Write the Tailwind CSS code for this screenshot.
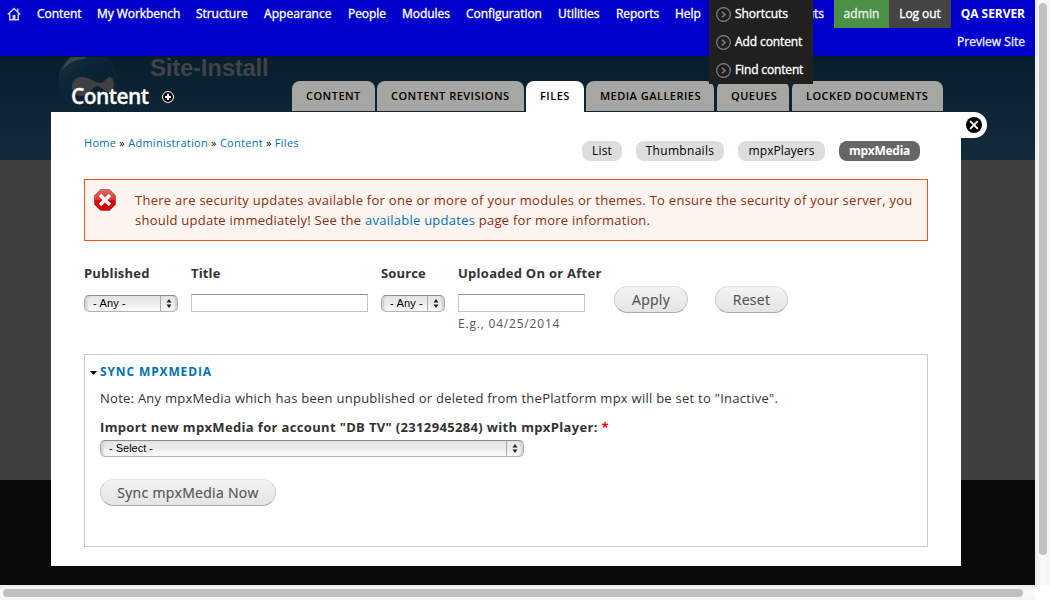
<!DOCTYPE html>
<html lang="en">
<head>
<meta charset="utf-8">
<title>Content | Site-Install</title>
<script src="https://cdn.jsdelivr.net/npm/@tailwindcss/browser@4"></script>
</head>
<body class="w-[1050px] h-[600px] overflow-hidden bg-white font-['Open_Sans',sans-serif] text-[13px] text-[#333]">
<div class="flex h-[585px]">
  <div class="relative w-[1035px] h-[585px] overflow-hidden bg-[#0a0a0a]">

    <!-- Dimmed page behind the overlay -->
    <div class="absolute inset-0 flex flex-col">
      <div class="h-[160px] bg-linear-to-b from-[#061e2e] from-35% to-[#132b3a] overflow-hidden pt-[46px] pl-[59px] flex gap-[34px]">
        <svg class="w-[57px] h-[62px] shrink-0" viewBox="0 0 57 62">
          <defs><linearGradient id="drop" x1="0" y1="0" x2="1" y2="1"><stop offset="0" stop-color="#1d323f"/><stop offset=".45" stop-color="#0a2537"/><stop offset="1" stop-color="#0c1d29"/></linearGradient></defs>
          <path d="M28.500 0C36 4 57 14 57 33C57 50 44 61.500 28.500 61.500C13 61.500 0 50 0 33C0 14 21 4 28.500 0Z" fill="url(#drop)" stroke="#1c2c36" stroke-width=".8"/>
          <path d="M3 24C7 14 13 9 20 9C27 9 29 12 24 13C15 14 9 18 3 24Z" fill="#3a4449"/>
          <path d="M22 31C30 30 36 37 41 37C45 37 48 31 51 31C56 32 56 44 51 46C46 47 42 40 38 40C34 40 30 50 22 50C15 50 12 44 13 39C14 34 18 31 22 31Z" fill="#404040"/>
          <path d="M35 50C38 46 42 46 46 50C42 48 39 48 35 50Z" fill="#404040"/>
        </svg>
        <div class="font-['Liberation_Sans',sans-serif] font-bold text-[24px] leading-[28px] pt-[8px] text-[#404346] tracking-[-0.24px]">Site-Install</div>
      </div>
      <div class="h-[320px] bg-[#404040]"></div>
    </div>

    <div class="relative flex flex-col h-full">
      <!-- Admin menu -->
      <nav class="relative flex flex-wrap content-start h-[57px] shrink-0 bg-[#0000cd] border-b border-[#111820] text-[12px] leading-[28px] font-medium text-white whitespace-nowrap tracking-[-0.05px] [-webkit-text-stroke:0.35px]">
        <div class="w-[29px] h-7 pl-[7px] pt-[7px]">
          <svg class="w-[14px] h-[14px]" viewBox="0 0 14 14" fill="none" stroke="#d5d5f7" stroke-width="1.400"><path d="M.8 7.500L7 1.500L13.200 7.500M2.700 6.500V12.800H11.300V6.500M10.700 1.500V4.500"/><path d="M5.500 8H8.500V12.500H5.500Z" fill="#d5d5f7" stroke="none"/></svg>
        </div>
        <a class="w-[60px] pl-2">Content</a>
        <a class="w-[99px] pl-2">My Workbench</a>
        <a class="w-[68px] pl-2">Structure</a>
        <a class="w-[84px] pl-2 tracking-[0.05px]">Appearance</a>
        <a class="w-[54px] pl-2">People</a>
        <a class="w-[64px] pl-2">Modules</a>
        <a class="w-[92px] pl-2">Configuration</a>
        <a class="w-[58px] pl-2">Utilities</a>
        <a class="w-[59px] pl-2">Reports</a>
        <a class="w-[42px] pl-2">Help</a>
        <a class="w-[125px] pr-[10px] text-right">Shortcuts</a>
        <a class="w-[55px] text-center bg-[#4c8f47] text-[#e8f3e8] tracking-[0.1px]">admin</a>
        <a class="w-[62px] text-center bg-[#444]">Log out</a>
        <a class="w-[84px] pr-[10px] text-right font-bold [-webkit-text-stroke:0]">QA SERVER</a>
        <a class="w-full pr-[10px] text-right text-[#eef] tracking-[0.02px]">Preview Site</a>
        <div class="absolute z-10 left-[709px] top-0 w-[104px] h-[84px] bg-[#202020]">
          <a class="flex items-center h-7 pl-[7px] gap-[4px] tracking-[-0.05px]"><svg class="w-[15px] h-[15px]" viewBox="0 0 15 15" fill="none" stroke="#828282" stroke-width="1.200"><circle cx="7.500" cy="7.500" r="6.800"/><path stroke-width="1.500" d="M6 4.700L9 7.500L6 10.300"/></svg>Shortcuts</a>
          <a class="flex items-center h-7 pl-[7px] gap-[4px] tracking-[-0.1px]"><svg class="w-[15px] h-[15px]" viewBox="0 0 15 15" fill="none" stroke="#828282" stroke-width="1.200"><circle cx="7.500" cy="7.500" r="6.800"/><path stroke-width="1.500" d="M6 4.700L9 7.500L6 10.300"/></svg>Add content</a>
          <a class="flex items-center h-7 pl-[7px] gap-[4px] tracking-[-0.15px]"><svg class="w-[15px] h-[15px]" viewBox="0 0 15 15" fill="none" stroke="#828282" stroke-width="1.200"><circle cx="7.500" cy="7.500" r="6.800"/><path stroke-width="1.500" d="M6 4.700L9 7.500L6 10.300"/></svg>Find content</a>
        </div>
      </nav>

      <!-- Overlay title and tabs -->
      <header class="flex h-[55px] pl-[71px] shrink-0">
        <h1 class="w-[91px] pt-[24px] text-[21px] leading-[30px] font-semibold text-white tracking-[-0.58px] [-webkit-text-stroke:0.3px]">Content</h1>
        <svg class="w-[12px] h-[12px] mt-[34px]" viewBox="0 0 12 12"><circle cx="6" cy="6" r="5.500" fill="#000" stroke="#fff"/><path d="M6 3V9M3 6H9" stroke="#fff" stroke-width="2"/></svg>
        <div class="flex ml-[118px] mt-[24px] h-[30px] text-[11px] leading-[30px] font-semibold text-black tracking-[0.48px] whitespace-nowrap">
          <a class="w-[83px] mr-[2px] pl-[14px] bg-[#a6a7a2] rounded-t-[8px]">CONTENT</a>
          <a class="w-[147px] mr-[2px] pl-[14px] bg-[#a6a7a2] rounded-t-[8px]">CONTENT REVISIONS</a>
          <a class="w-[58px] h-[31px] mr-[2px] pl-[14px] bg-white rounded-t-[8px]">FILES</a>
          <a class="w-[128px] mr-[3px] pl-[14px] bg-[#a6a7a2] rounded-t-[8px]">MEDIA GALLERIES</a>
          <a class="w-[72px] mr-[3px] pl-[14px] bg-[#a6a7a2] rounded-t-[8px]">QUEUES</a>
          <a class="w-[151px] pl-[14px] bg-[#a6a7a2] rounded-t-[8px]">LOCKED DOCUMENTS</a>
        </div>
      </header>

      <div class="flex items-start pl-[51px]">
        <main class="w-[910px] h-[454px] bg-white px-[33px]">
          <div class="flex justify-between h-[67px] pt-[21px]">
            <div class="text-[11px] leading-[20px] text-black tracking-[0.27px] whitespace-pre"><a class="text-[#0071b3]">Home</a> » <a class="text-[#0071b3]">Administration</a> » <a class="text-[#0071b3]">Content</a> » <a class="text-[#0071b3]">Files</a></div>
            <div class="flex mt-[8px] mr-[8px] h-5 gap-[14px] text-[12px] leading-5 text-black text-center">
              <a class="w-[40px] bg-[#ddd] rounded-[8px] tracking-[0.2px]">List</a>
              <a class="w-[88px] bg-[#ddd] rounded-[8px] tracking-[0.3px]">Thumbnails</a>
              <a class="w-[87px] bg-[#ddd] rounded-[8px] tracking-[0.1px]">mpxPlayers</a>
              <a class="w-[81px] bg-[#666] text-white font-bold rounded-[8px] tracking-[-0.26px]">mpxMedia</a>
            </div>
          </div>

          <div class="flex w-[844px] h-[62px] border border-[#ed541d] bg-[#fef5f1] pl-[9px] pt-[9px]">
            <svg class="w-[22px] h-[22px] mr-[19px]" viewBox="0 0 22 22"><defs><linearGradient id="err" x1="0" y1="0" x2="0" y2="1"><stop offset="0" stop-color="#dc6a6a"/><stop offset=".48" stop-color="#d63a3a"/><stop offset=".5" stop-color="#d00"/><stop offset="1" stop-color="#c80000"/></linearGradient></defs><path d="M6.500 .5H15.500L21.500 6.500V15.500L15.500 21.500H6.500L.5 15.500V6.500Z" fill="url(#err)" stroke="#c43030" stroke-width=".6"/><path d="M6 6L16 16M16 6L6 16" stroke="#fff" stroke-width="3.400"/></svg>
            <div class="text-[#8c2e0b] leading-[20px] pt-px whitespace-nowrap"><div class="tracking-[0.275px]">There are security updates available for one or more of your modules or themes. To ensure the security of your server, you</div><div class="tracking-[0.255px]">should update immediately! See the <a class="text-[#0071b3]">available updates</a> page for more information.</div></div>
          </div>

          <div class="flex h-[113px] pt-[22px] whitespace-nowrap">
            <div class="w-[107px]">
              <div class="h-[32px] leading-5 font-bold tracking-[0.2px]">Published</div>
              <div class="flex w-[94px] h-[17px] rounded-[5px] border border-[#b5b5b5] border-t-[#8c8c8c] bg-linear-to-b from-[#e4e4e4] via-[#ececec] to-[#fdfdfd] shadow-[inset_3px_0_2px_-1px_#ccc,inset_-3px_0_2px_-1px_#ccc] font-['Liberation_Sans',sans-serif] text-[11px] leading-[15px] text-black tracking-[0.15px]"><span class="pl-2 w-[75px]">- Any -</span><span class="border-l border-[#aaa] pl-[5px] pt-[3px]"><svg class="w-[6px] h-[9px]" viewBox="0 0 6 9" fill="#222"><path d="M3 0L5.500 3.600H.5ZM3 9L5.500 5.400H.5Z"/></svg></span></div>
            </div>
            <div class="w-[190px]">
              <div class="h-[32px] leading-5 font-bold tracking-[0.15px]">Title</div>
              <div class="w-[177px] h-[18px] -mt-px border border-[#c4c4c4] border-t-[#8f8f8f]"></div>
            </div>
            <div class="w-[77px]">
              <div class="h-[32px] leading-5 font-bold tracking-[0.15px]">Source</div>
              <div class="flex w-[64px] h-[17px] rounded-[5px] border border-[#b5b5b5] border-t-[#8c8c8c] bg-linear-to-b from-[#e4e4e4] via-[#ececec] to-[#fdfdfd] shadow-[inset_3px_0_2px_-1px_#ccc,inset_-3px_0_2px_-1px_#ccc] font-['Liberation_Sans',sans-serif] text-[11px] leading-[15px] text-black tracking-[0.15px]"><span class="pl-2 w-[45px]">- Any -</span><span class="border-l border-[#aaa] pl-[5px] pt-[3px]"><svg class="w-[6px] h-[9px]" viewBox="0 0 6 9" fill="#222"><path d="M3 0L5.500 3.600H.5ZM3 9L5.500 5.400H.5Z"/></svg></span></div>
            </div>
            <div class="w-[156px]">
              <div class="h-[32px] leading-5 font-bold tracking-[0.27px]">Uploaded On or After</div>
              <div class="w-[127px] h-[18px] -mt-px border border-[#c4c4c4] border-t-[#8f8f8f]"></div>
              <div class="text-[12px] leading-5 pt-[2px] text-[#555] tracking-[0.8px]">E.g., 04/25/2014</div>
            </div>
            <div class="flex gap-[27px] mt-[23px] h-[27px] text-[14px] leading-[25px] text-[#555] text-center tracking-[0.3px] [-webkit-text-stroke:0.2px]">
              <div class="w-[74px] rounded-full border border-[#ccc] border-t-[#e2e2e2] border-b-[#aaa] bg-linear-to-b from-[#f3f3f3] to-[#e5e5e5]">Apply</div>
              <div class="w-[73px] rounded-full border border-[#ccc] border-t-[#e2e2e2] border-b-[#aaa] bg-linear-to-b from-[#f3f3f3] to-[#e5e5e5]">Reset</div>
            </div>
          </div>

          <section class="w-[844px] h-[193px] border border-[#ccc] pt-[7px] pl-[15px] whitespace-nowrap">
            <div class="-ml-[10px] flex items-center text-[12px] leading-5 font-bold text-[#0071b3] tracking-[0.87px]"><svg class="w-[7px] h-[4px] mr-[3px] mt-px" viewBox="0 0 7 4"><path d="M0 0H7L3.500 4Z"/></svg>SYNC MPXMEDIA</div>
            <div class="leading-5 mt-[6px] tracking-[0.26px]">Note: Any mpxMedia which has been unpublished or deleted from thePlatform mpx will be set to "Inactive".</div>
            <div class="leading-5 mt-[9px] font-bold tracking-[0.345px]">Import new mpxMedia for account "DB TV" (2312945284) with mpxPlayer: <span class="text-[#f00]">*</span></div>
            <div class="flex w-[424px] h-[17px] mt-[3px] rounded-[5px] border border-[#b5b5b5] border-t-[#8c8c8c] bg-linear-to-b from-[#e4e4e4] via-[#ececec] to-[#fdfdfd] shadow-[inset_3px_0_2px_-1px_#ccc,inset_-3px_0_2px_-1px_#ccc] font-['Liberation_Sans',sans-serif] text-[11px] leading-[15px] text-black"><span class="pl-2 w-[405px]">- Select -</span><span class="border-l border-[#aaa] pl-[5px] pt-[3px]"><svg class="w-[6px] h-[9px]" viewBox="0 0 6 9" fill="#222"><path d="M3 0L5.500 3.600H.5ZM3 9L5.500 5.400H.5Z"/></svg></span></div>
            <div class="w-[176px] h-[27px] mt-[22px] text-[14px] leading-[25px] text-[#555] text-center tracking-[0.3px] [-webkit-text-stroke:0.2px] rounded-full border border-[#ccc] border-t-[#e2e2e2] border-b-[#aaa] bg-linear-to-b from-[#f3f3f3] to-[#e5e5e5]">Sync mpxMedia Now</div>
          </section>
        </main>
        <div class="w-[26px] h-[26px] bg-white rounded-r-full pl-[5px] pt-[5px]"><svg class="w-4 h-4" viewBox="0 0 16 16"><circle cx="8" cy="8" r="8"/><path d="M4.200 4.200L11.800 11.800M11.800 4.200L4.200 11.800" stroke="#fff" stroke-width="1.900"/></svg></div>
      </div>
    </div>
  </div>
  <div class="w-[15px] bg-linear-to-r from-[#ececec] via-[#fafafa] to-[#f4f4f4] pl-1 pt-[3px]"><div class="w-2 h-[552px] rounded-full bg-[#c1c1c1]"></div></div>
</div>
<div class="w-[1035px] h-[15px] bg-linear-to-b from-[#ececec] via-[#fafafa] to-[#f4f4f4] pl-[3px] pt-1"><div class="w-[1020px] h-2 rounded-full bg-[#c1c1c1]"></div></div>
</body>
</html>
